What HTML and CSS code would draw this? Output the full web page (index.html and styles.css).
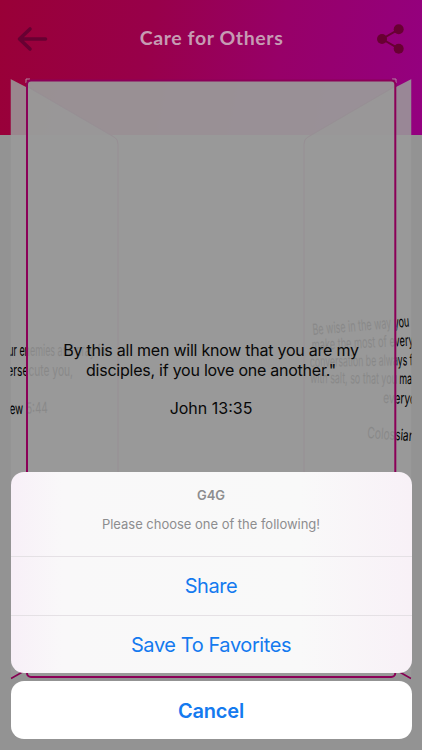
FILE: index.html
```html
<!DOCTYPE html>
<html lang="en">
<head>
<meta charset="utf-8">
<title>Care for Others</title>
<link rel="stylesheet" href="styles.css">
</head>
<body>
<main class="screen">
  <header class="header">
    <svg class="icon back" viewBox="0 0 32 28"><path d="M14 4 3.5 14 14 24M4 14H29.5"/></svg>
    <h1 class="title">Care for Others</h1>
    <svg class="icon share" viewBox="0 0 32 32"><path d="M7 16 23.7 6.3M7 16 23.7 25.7"/><circle cx="7" cy="16" r="5"/><circle cx="23.7" cy="6.3" r="5"/><circle cx="23.7" cy="25.7" r="5"/></svg>
  </header>

  <svg class="carousel" viewBox="0 0 422 750">
    <defs>
      <clipPath id="view"><rect x="10.5" y="70" width="401" height="620"/></clipPath>
      <clipPath id="left-edge"><rect x="10.5" y="300" width="16" height="200"/></clipPath>
      <clipPath id="left-card"><rect x="28" y="300" width="180" height="200"/></clipPath>
      <clipPath id="right-edge"><rect x="396.5" y="300" width="15" height="200"/></clipPath>
      <clipPath id="right-card"><rect x="280" y="300" width="115" height="200"/></clipPath>
      <g id="left-verse">
        <text x="-2" y="356" textLength="111" lengthAdjust="spacingAndGlyphs">your enemies and pray for</text>
        <text x="-52" y="375.5" textLength="125" lengthAdjust="spacingAndGlyphs">those who persecute you,</text>
        <text x="-17" y="414" textLength="65" lengthAdjust="spacingAndGlyphs" transform="rotate(-2 20 414)">Matthew 5:44</text>
      </g>
      <g id="right-verse">
        <text x="313" y="335" textLength="97" lengthAdjust="spacingAndGlyphs" transform="rotate(-5 313 335)">Be wise in the way you</text>
        <text x="312" y="350.5" textLength="102" lengthAdjust="spacingAndGlyphs" transform="rotate(-2.8 312 350.5)">make the most of every</text>
        <text x="310" y="367" textLength="103" lengthAdjust="spacingAndGlyphs" transform="rotate(-1 310 367)">conversation be always f</text>
        <text x="310" y="383" textLength="107" lengthAdjust="spacingAndGlyphs" transform="rotate(.6 310 383)">with salt, so that you may</text>
        <text x="383" y="403" textLength="48" lengthAdjust="spacingAndGlyphs" transform="rotate(2 383 403)">everyone.</text>
        <text x="367" y="438" textLength="53" lengthAdjust="spacingAndGlyphs" transform="rotate(4 367 438)">Colossians</text>
      </g>
    </defs>
    <g clip-path="url(#view)">
      <path class="side" d="M10.5 79 26 87V671L10.5 679Z"/>
      <path class="side" d="M411.5 79 396 87V671L411.5 679Z"/>
      <path class="edge" d="M11 678.5 26 670M411 678.5 396 670"/>
    </g>
    <path class="corner" d="M26 83V79H30M396 83V79H392"/>
    <rect class="card" x="27" y="80.5" width="368" height="596.5" rx="4"/>
    <path class="fold" d="M28 87 114 137Q118 139 118 144V640L28 676Z"/>
    <path class="fold" d="M394 87 308 137Q304 139 304 144V640L394 676Z"/>
    <path class="fold-line" d="M28 87 114 137Q118 139 118 144V620M394 87 308 137Q304 139 304 144V620"/>
    <g class="faint" clip-path="url(#left-card)"><use href="#left-verse"/></g>
    <g class="faint" clip-path="url(#right-card)"><use href="#right-verse"/></g>
    <g clip-path="url(#left-edge)"><use href="#left-verse"/></g>
    <g clip-path="url(#right-edge)"><use href="#right-verse"/></g>
    <rect class="outline" x="27" y="80.5" width="368.3" height="596.5" rx="4"/>
  </svg>

  <section class="verse">
    <p class="line">By this all men will know that you are my</p>
    <p class="line">disciples, if you love one another."</p>
    <p class="line reference">John 13:35</p>
  </section>

  <section class="sheet">
    <div class="options">
      <div class="prompt"><h2>G4G</h2><p>Please choose one of the following!</p></div>
      <button class="action">Share</button>
      <button class="action">Save To Favorites</button>
    </div>
    <button class="action cancel">Cancel</button>
  </section>
</main>
</body>
</html>
```

FILE: styles.css
```css
* { box-sizing: border-box; }
body { margin: 0; font-family: Inter, "Liberation Sans", sans-serif; }
h1, h2, p { margin: 0; }
.screen {
  position: relative;
  width: 422px;
  height: 750px;
  overflow: hidden;
  display: flex;
  flex-direction: column;
  background: #939393;
}
.header {
  height: 135px;
  padding: 22px 15px 0 16px;
  display: flex;
  align-items: flex-start;
  justify-content: space-between;
  background: linear-gradient(100deg, #990037 0%, #98004a 35%, #970068 65%, #940080 100%);
}
.icon { width: 32px; height: 32px; fill: none; stroke: #680032; stroke-linecap: round; stroke-linejoin: round; }
.back { height: 28px; margin-top: 3px; stroke-width: 3.6; }
.share { margin-top: 1px; stroke-width: 2; }
.share circle { fill: #680032; stroke: none; }
.title {
  font: 700 19.5px/32px Lato, sans-serif;
  letter-spacing: 0.6px;
  white-space: nowrap;
  color: #c69bb3;
}
.carousel { position: absolute; inset: 0; width: 422px; height: 750px; font-size: 15.5px; }
.side { fill: #9a9a9a; fill-opacity: 0.88; }
.edge { fill: none; stroke: #850052; stroke-width: 1.5; }
.corner { fill: none; stroke: #b087a0; stroke-width: 1; }
.card { fill: #999; fill-opacity: 0.94; }
.fold { fill: #999; fill-opacity: 0.82; }
.fold-line { fill: none; stroke: #978f94; stroke-width: 1; }
.faint { opacity: 0.1; }
.outline { fill: none; stroke: #8b0058; stroke-width: 2; }
.verse {
  position: relative;
  padding-top: 206px;
  display: flex;
  flex-direction: column;
  align-items: center;
  font-size: 16px;
  line-height: 19.5px;
  letter-spacing: -0.24px;
  color: #080808;
}
.line { white-space: nowrap; }
.reference { margin-top: 19px; letter-spacing: 0; }
.sheet {
  position: absolute;
  left: 10.5px;
  right: 10.5px;
  top: 472px;
  display: flex;
  flex-direction: column;
  gap: 8px;
}
.options {
  height: 201px;
  border-radius: 13px;
  overflow: hidden;
  background: linear-gradient(90deg, #f8f0f8, #f9f8f9 13%, #f9f9f9 72%, #f8f1f7);
}
.prompt { height: 84px; padding-top: 15px; text-align: center; color: #8d8d8f; font-size: 13px; }
.prompt h2 { font-size: 13px; line-height: 16px; font-weight: 600; }
.prompt p { margin-top: 13px; line-height: 16px; letter-spacing: -0.02px; }
.action {
  display: block;
  width: 100%;
  height: 58.5px;
  padding: 1px 0 0;
  border: 0;
  border-top: 1px solid #e5e1e5;
  background: none;
  font: 400 20px/24px Inter, sans-serif;
  letter-spacing: -0.42px;
  color: #147aef;
}
.cancel { height: 58px; padding-top: 2px; border: 0; border-radius: 13px; background: #fff; font-weight: 600; letter-spacing: -0.2px; }
```
